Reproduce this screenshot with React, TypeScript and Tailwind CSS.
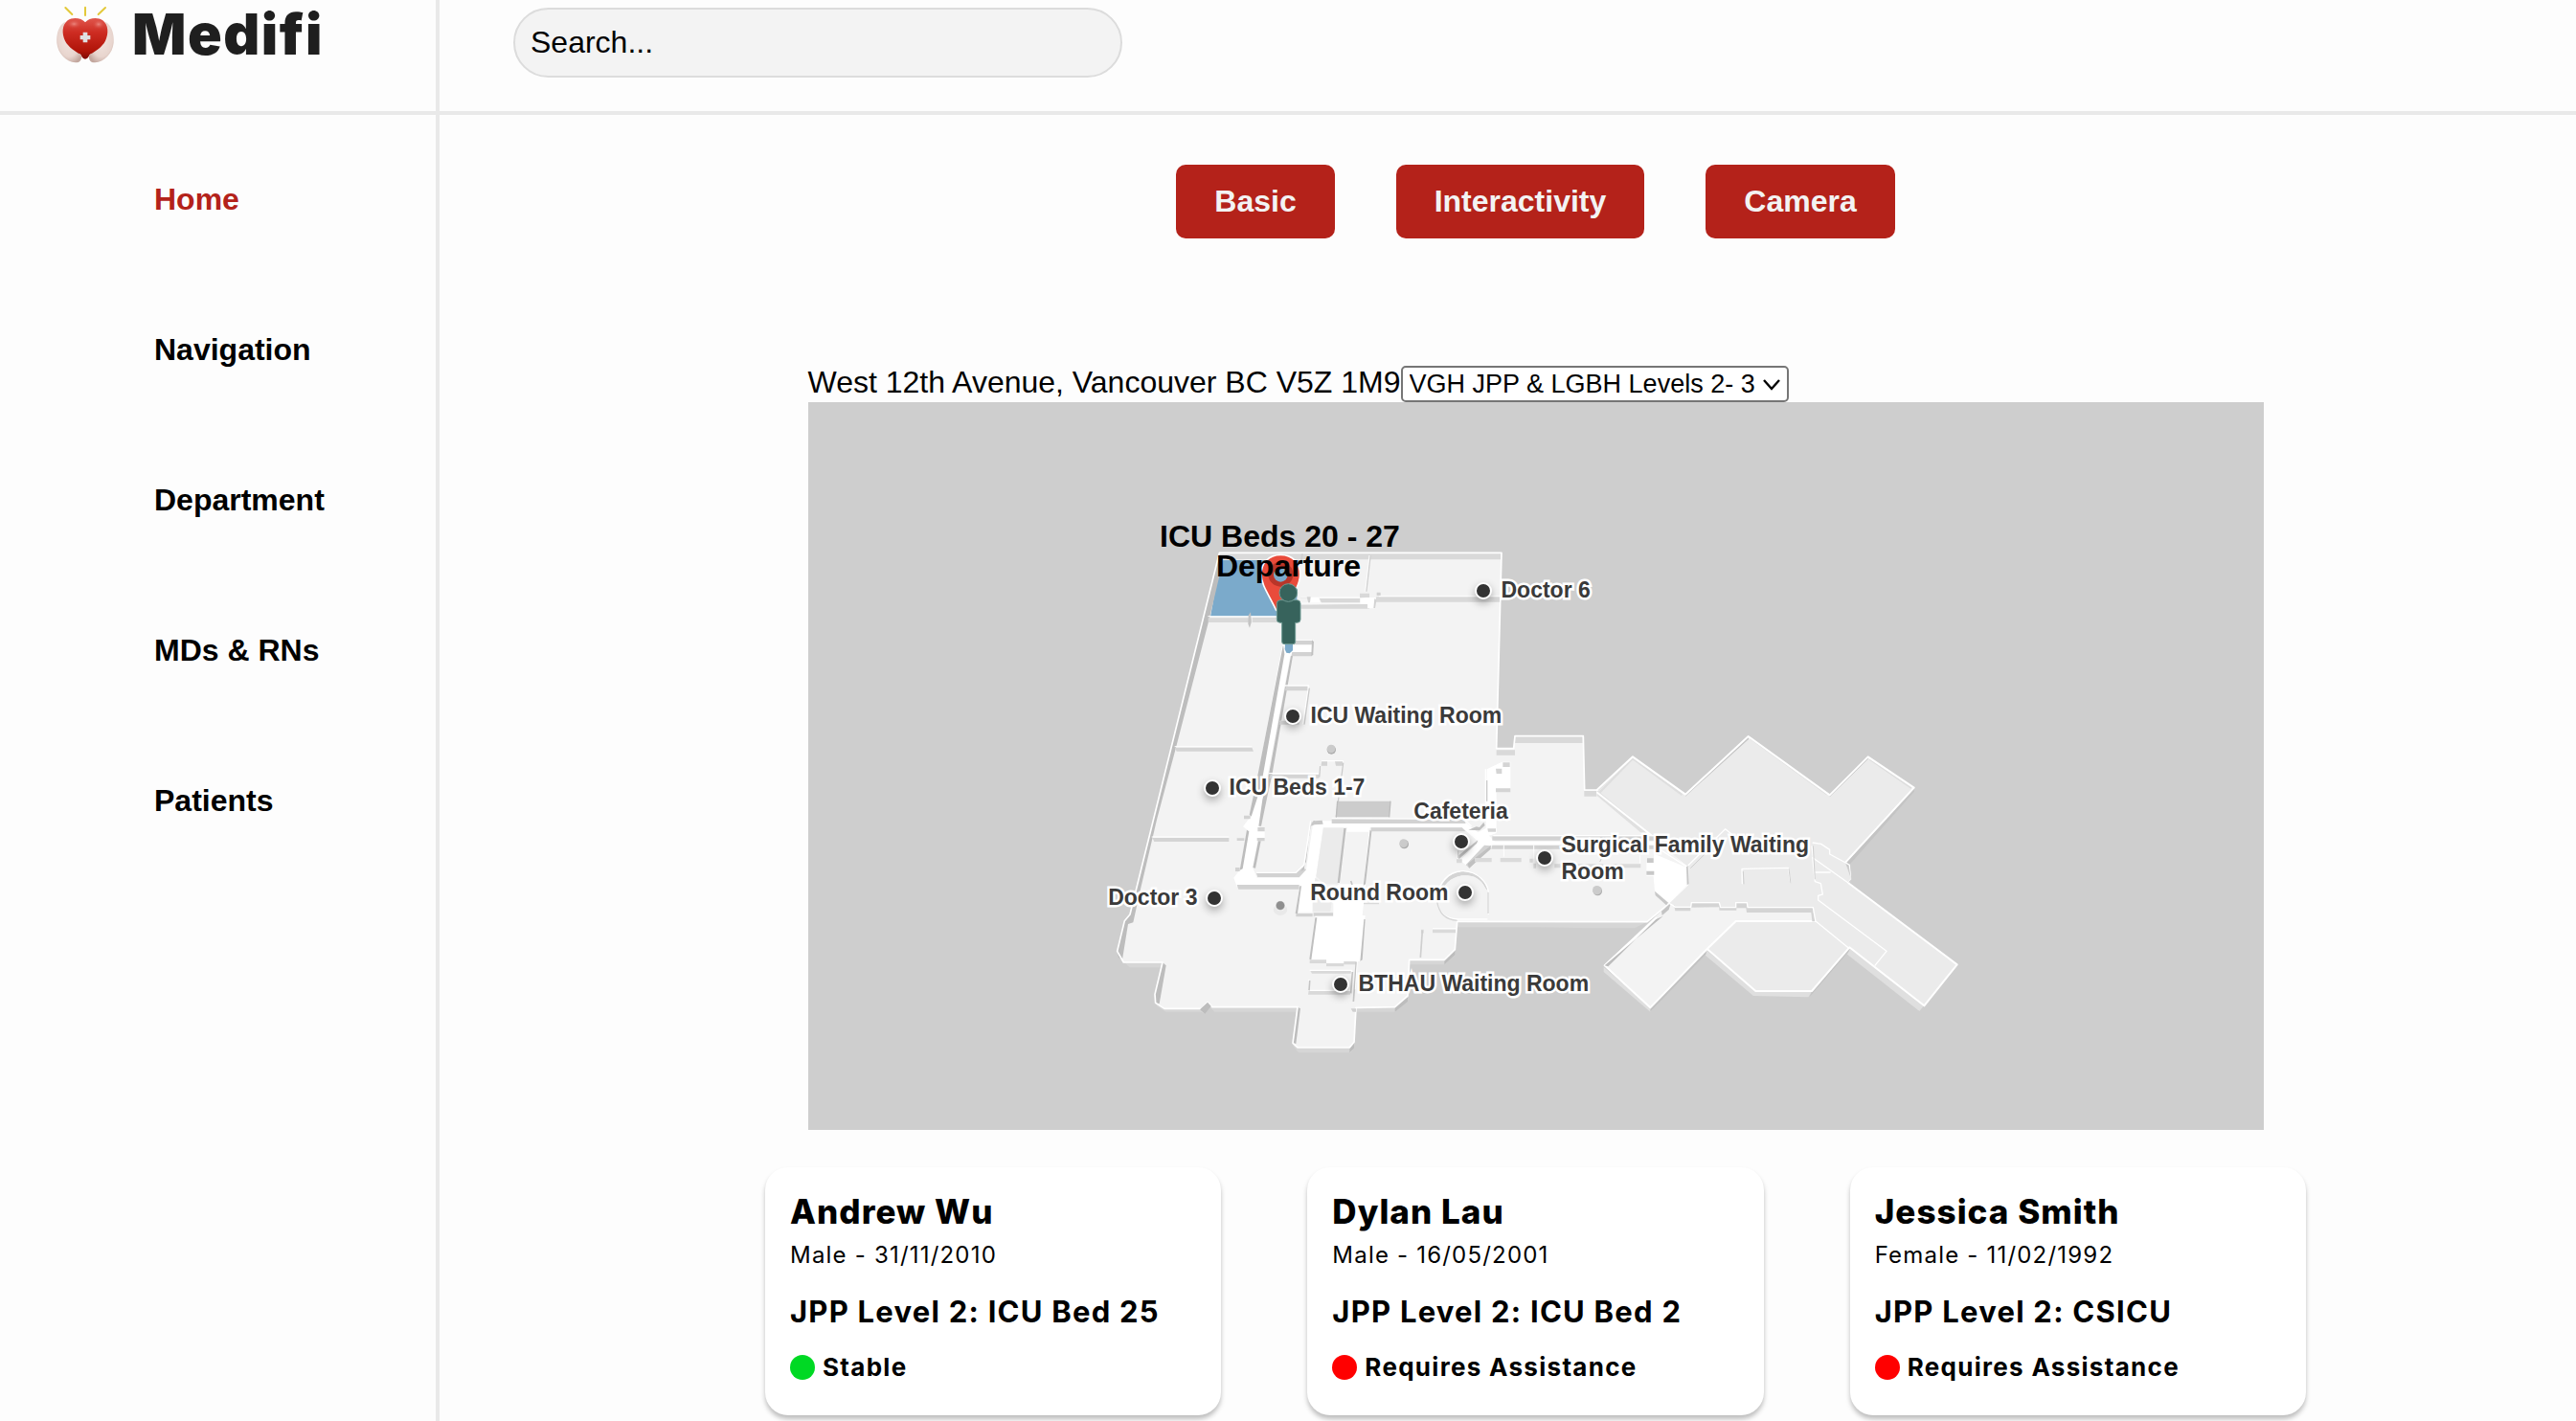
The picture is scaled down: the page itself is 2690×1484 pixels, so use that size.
const NAV_ITEMS = ["Home", "Navigation", "Department", "MDs & RNs", "Patients"];

const DEMOS = ["Basic", "Interactivity", "Camera"];

const PATIENTS = [
  { name: "Andrew Wu", info: "Male - 31/11/2010", place: "JPP Level 2: ICU Bed 25", stable: true },
  { name: "Dylan Lau", info: "Male - 16/05/2001", place: "JPP Level 2: ICU Bed 2", stable: false },
  { name: "Jessica Smith", info: "Female - 11/02/1992", place: "JPP Level 2: CSICU", stable: false },
];

type Place = { label: string; x: number; y: number; dotX: number; dotY: number; side: "left" | "right" | "center" };

// Positions are in map units; the map is 1520 by 760 units.
const PLACES: Place[] = [
  { label: "Doctor 6", x: 724, y: 196, dotX: 705, dotY: 197, side: "right" },
  { label: "ICU Waiting Room", x: 525, y: 327, dotX: 506, dotY: 328, side: "right" },
  { label: "ICU Beds 1-7", x: 440, y: 402, dotX: 422, dotY: 403, side: "right" },
  { label: "Cafeteria", x: 682, y: 427, dotX: 682, dotY: 459, side: "center" },
  { label: "Surgical Family Waiting\nRoom", x: 787, y: 476, dotX: 769, dotY: 476, side: "right" },
  { label: "Doctor 3", x: 407, y: 517, dotX: 424, dotY: 518, side: "left" },
  { label: "Round Room", x: 669, y: 512, dotX: 686, dotY: 512, side: "left" },
  { label: "BTHAU Waiting Room", x: 575, y: 607, dotX: 556, dotY: 608, side: "right" },
];

const TITLES = [
  { label: "ICU Beds 20 - 27", x: 493, y: 140 },
  { label: "Departure", x: 502, y: 171 },
];

const SIDE_CLASS = {
  right: "-translate-y-1/2 text-left",
  left: "-translate-x-full -translate-y-1/2 text-right",
  center: "-translate-x-1/2 -translate-y-1/2 text-center",
};

function place(x: number, y: number) {
  return { left: `${(x / 1520) * 100}%`, top: `${(y / 760) * 100}%` };
}

function Logo() {
  return (
    <svg viewBox="174 15 186 186" className="size-[62px]" aria-hidden="true">
      <defs>
        <linearGradient id="heart" x1="0" y1="0" x2="0" y2="1">
          <stop offset="0" stopColor="#e0564c" />
          <stop offset="0.35" stopColor="#cd2c22" />
          <stop offset="0.8" stopColor="#b01409" />
          <stop offset="1" stopColor="#7e0a04" />
        </linearGradient>
        <radialGradient id="shine">
          <stop offset="0" stopColor="#ee9189" stopOpacity="0.85" />
          <stop offset="1" stopColor="#d8443a" stopOpacity="0" />
        </radialGradient>
        <radialGradient id="hand" cx="0.5" cy="0.4" r="0.65">
          <stop offset="0" stopColor="#f3e6e1" />
          <stop offset="0.7" stopColor="#e8d5ce" />
          <stop offset="1" stopColor="#c3a79e" />
        </radialGradient>
      </defs>
      <g stroke="#e3c93a" strokeWidth="6" strokeLinecap="round">
        <path d="M205 24L226 45" />
        <path d="M267 23V48" />
        <path d="M330 24L308 45" />
      </g>
      <path d="M203 68C184 80 176 106 178 134C181 168 208 194 236 196C250 197 256 188 255 176C240 150 205 130 203 68Z" fill="url(#hand)" />
      <path d="M331 68C350 80 358 106 356 134C353 168 326 194 298 196C284 197 278 188 279 176C294 150 329 130 331 68Z" fill="url(#hand)" />
      <path d="M267 70C255 56 228 53 212 64C194 78 193 106 204 128C214 148 238 162 250 169C257 173 255 184 267 185C279 184 277 173 284 169C296 162 320 148 330 128C341 106 340 78 322 64C306 53 279 56 267 70Z" fill="url(#heart)" />
      <ellipse cx="232" cy="75" rx="24" ry="15" fill="url(#shine)" />
      <ellipse cx="309" cy="76" rx="20" ry="16" fill="url(#shine)" />
      <path d="M260 101h14v10h9v13h-9v9h-14v-9h-9v-13h9z" fill="#dfdfe2" />
    </svg>
  );
}

const OUTLINE =
  "M400-668H1284L1268-55H1322L1326-94H1540L1544 75H1582L1760 222L1868 315L1870 372L1810 430L1740 488L1145 487L1138 575L1105 607H995L990 720L950 755L828 757L822 865L808 882H645L630 868L645 755H378L363 740L345 760H228L200 742L198 715L222 615H100L80 580L103 485L120 465Z";

function FloorPlan() {
  return (
    <svg viewBox="0 0 4560 2280" className="block size-full" aria-label="Floor plan" role="img">
      <g transform="translate(888 1140)" strokeLinejoin="round">
        {/* outer wall faces */}
        <path
          d="M1145 487V505H1400L1560 508H1700L1740 488ZM1138 575V593L1105 622H995V607H1105ZM990 720V738L950 770H828V757H950ZM822 865V884L812 898H648L632 878L630 868L645 883H808ZM645 755V770H385L370 755L353 775L342 770H232L205 752L200 742L228 760H345L363 740L378 755ZM222 615V631H120L90 606L85 590L100 612Z"
          fill="#d6d6d6"
        />
        <path d="M1138 575V592L1105 622V607ZM990 720V738L950 770V755ZM822 865V884L808 898V882Z" fill="#bdbdbd" />
        <path d={OUTLINE} fill="#f3f3f3" />
        {/* blue selected room */}
        <path d="M404-645H650L640-468H372Z" fill="#7baacb" />
        {/* inner faces along the outer wall */}
        <path d="M400-668H1282V-647H416Z" fill="#d9d9d9" />
        <path d="M400-668L120 465L103 485L80 580L84 600L96 606L114 495L130 490L152 390L204 168L262-50L368-460L412-645Z" fill="#bdbdbd" />
        <path d="M222 615L233 625L212 745L200 742L198 715Z" fill="#bdbdbd" />
        <path d="M645 755L654 760L640 870L630 868Z" fill="#bdbdbd" />
        <path d="M1326-94H1538V-72H1326ZM1268-50H1326V-34H1268ZM1543 78H1582V95H1543Z" fill="#d9d9d9" />
        <path d={OUTLINE} fill="none" stroke="#fff" strokeWidth="5" />
        <path d="M363 740L374 752L355 776L339 763Z" fill="#bdbdbd" />

        {/* east wing, raised floor */}
        <path d="M1604 630V645L1750 770L1927 585V575L1750 755ZM1928 578L1921 592L2073 720L2245 724L2257 705H2080ZM2376 572L2367 590L2593 768L2608 750Z" fill="#dfdfdf" />
        <path d="M1750 755L1750 770L1924 590L1928 574ZM2257 705L2250 722L2372 580L2374 570Z" fill="#c2c2c2" />
        <path d="M1810 430L1604 625L1750 757L1928 573L2018 486L2268 486L2258 440Z" fill="#f3f3f3" />
        <path d="M1582 82L1695-29L1860 91L2057-93L2312 93L2432-29L2576 68L2362 305L2378 350L2372 366L2710 622L2608 750L2374 570L2257 705H2080L1928 573L2018 486L2268 486L2260 445L1830 440L1810 430L1870 372L1868 315L1740 215Z" fill="#ebebeb" />
        <path d="M1584 76L1584 94L1748 232L1762 232L1762 222Z" fill="#e0e0e0" />
        <path d="M2576 70L2364 303L2368 316L2577 80Z" fill="#c4c4c4" />
        <path d="M1860 95V88L2057-93L2058-84ZM2312 97V88L2432-30V-22Z" fill="#c4c4c4" />
        <path d="M1590 84L1695-24L1850 90M2066-86L2304 88M2438-22L2568 68" fill="none" stroke="#dedede" strokeWidth="7" />
        <path d="M1582 76L1695-29L1860 89L2057-93L2312 91L2432-29L2576 68L2362 301M2370 366L2711 622L2608 751L2374 568L2256 705H2080L1928 573L2018 486H2268M1928 573L1750 757L1607 625L1770 475M1582 82L1760 222" fill="none" stroke="#fff" strokeWidth="6" />
        <path d="M1790 470L1607 625L1618 628L1768 480Z" fill="#bdbdbd" />
        <path d="M1785 455L1815 428L1808 450L1787 468Z" fill="#c4c4c4" />
        {/* walls of the raised wing */}
        <path d="M1824 434L1830 442H1877L1878 430H1965L1970 443H2018V430H2053L2055 443H2258L2267 487H2257L2254 459H2052L2050 445H2020V452H1966V442L1876 443V454H1828Z" fill="#d4d4d4" />
        <path d="M1810 430L1829 442H1877L1879 428H1966L1970 443H2018V428H2053L2055 443H2260L2268 488M1868 312L1985 197L2005 214M1740 235L1868 318V372M2038 370L2037 322L2182 319L2190 368M2258 240L2285 244L2312 262L2312 276L2362 303L2374 310L2380 352L2370 366L2260 288L2256 250M2258 285L2266 362L2284 368L2290 402L2276 406V420L2490 580L2453 626M2266 333H2315M2268 486L2374 572" fill="none" stroke="#fff" strokeWidth="4" />
        <path d="M2043 370L2041 330M2184 322L2190 368M2260 250L2266 355M2378 312L2381 354L2372 364M1876 320L1945 252" fill="none" stroke="#cfcfcf" strokeWidth="3" />
        <path d="M1762 275L1865 318L1868 370L1810 430L1764 392L1760 345H1738V303H1760Z" fill="#fff" />
        <path d="M1863 316L1868 313L1871 370L1865 372ZM1740 289H1760V303H1740ZM1738 329H1762V341H1738ZM1764 392L1806 428L1800 436L1766 405Z" fill="#c8c8c8" />

        {/* upper rooms */}
        <path d="M365-464H500V-450H365ZM503-465H585V-450H503ZM655-505L870-508V-493H655ZM655-525H840V-511H720L712-529H655ZM892-530H1278V-514H888ZM840-541H870V-528H840Z" fill="#d9d9d9" />
        <path d="M364-469H580M655-528H840M655-510H862M900-532H1282" stroke="#fff" strokeWidth="3" />
        <path d="M873-660L860-547M660-665L656-640" stroke="#cfcfcf" strokeWidth="5" />
        <path d="M870-660L857-547" stroke="#fff" strokeWidth="3" />
        <path d="M842-525L860-528L890-528L886-494H864V-508H842ZM676-528H712L716-512H676Z" fill="#fff" />
        <path d="M886-525L892-520L888-495H883ZM674-530H686L684-512H678ZM893-544H905V-534H893Z" fill="#d2d2d2" />
        <path d="M491-472L498-482L500-450L495-433L490-445Z" fill="#c4c4c4" />
        <path d="M260-58H502L507-46H266Z" fill="#d4d4d4" />
        <path d="M260-61H502" stroke="#fff" strokeWidth="3" />
        <path d="M190 225H430V237H196ZM455 226H478V234H455Z" fill="#d4d4d4" />
        <path d="M188 222H430" stroke="#fff" strokeWidth="3" />

        {/* main corridor */}
        <path d="M597-380L624-395H695V-350L622-345L551 30L525 190L542 195V235L520 232L505 320L518 350H650L672 325L692 190L705 172H1167L1187 190L1210 208L1235 195L1238 10L1285-13H1312V80H1268V210L1245 218L1262 236H1770V248H1250L1240 262L1182 318L1160 300V290L1212 238L1160 192H725L703 345L692 458H640L650 378H455L445 350L465 325L488 200L474 190L497 160Z" fill="#fff" />
        <path d="M593-345L600-380L604-350L530 65L500 158L494 152L518 40ZM624-345L556 20L535 105L523 188L531 188L547 110L565 28L630-345ZM486 200L493 205L473 322L464 326ZM522 235H530L513 320L505 318Z" fill="#bdbdbd" />
        <path d="M516 336H640L660 317L672 325L650 348H520ZM625-393H690V-380H628ZM628-357H690V-344H625ZM455 372H650V386H460ZM752 166H1165L1172 180H752ZM875 193H1160L1172 205H875ZM1255 220H1770V233H1255ZM1255 248H1770V260H1252ZM1230 248L1252 250L1184 320L1172 310ZM640 462H692V472H640ZM695 460H757V470H695ZM520 192H542V205H520ZM518 225H542V235H518ZM477 155H497V166H477ZM450 318H464V330H450Z" fill="#d2d2d2" />
        <path d="M690-395L696-390L694-348L688-345ZM1210 232L1206 242L1150 292V280ZM1180 200L1205 190L1215 192L1228 176L1232 186L1215 202ZM1250 250V260L1182 320L1178 306ZM690 170L685 195L665 325L655 330L672 300L684 190ZM652 376H657L645 462H638Z" fill="#c0c0c0" />
        <path d="M752 164L1165 166L1190 188M1258 218H1770M517 334H640L665 310L686 172M605-252H680L662-132M590-140H650M555 23H712L722-16H787L768 160M1234 120V10" fill="none" stroke="#fff" strokeWidth="4" />
        <path d="M608-250H676V-236H606ZM590-142H650V-130H588ZM560 27H712V38H556ZM720-14H738V-1H718ZM762-14H786V-1H765ZM1288-11H1310V3H1288ZM1266 8H1285V24H1268ZM1266 70H1312V82H1266ZM1240 196H1266V206H1242Z" fill="#d4d4d4" />
        <path d="M682-244L666-130M716 0L713 35M788-10L766 160M1238 45V110" stroke="#cacaca" strokeWidth="4" />
        <path d="M700 172C692 168 690 180 686 188L698 184L725 182L722 170Z" fill="#c8c8c8" />
        <path d="M770 110H936L932 160H766Z" fill="#cccccc" />
        <path d="M936 110L932 160M770 110L766 160" stroke="#bdbdbd" strokeWidth="4" />

        {/* central block */}
        <path d="M726 194H790L771 370H730L703 345Z" fill="#ebebeb" />
        <path d="M692 425L700 350L757 390L750 440L748 456H692Z" fill="#ebebeb" />
        <path d="M800 192H872L858 375L848 468H857L845 612H790V628H735V612H683L700 470H757V430L745 420L768 375L778 368Z" fill="#fff" />
        <path d="M798 206H868L852 370H778Z" fill="#f3f3f3" />
        <path d="M790 195H797L777 366H770ZM872 200L877 205L858 370L851 375ZM700 475L706 475L688 607L682 605ZM853 480L857 480L848 607L841 612Z" fill="#bfbfbf" />
        <path d="M852 428H900V433H852ZM683 607H735V618H683ZM790 612H830V622H790ZM735 618H790V628H735ZM684 640H812V650H690ZM680 703H810V716H678Z" fill="#d9d9d9" />
        <path d="M683 640H815V703H680V670" fill="none" stroke="#fff" strokeWidth="4" />
        <path d="M829 615L820 738M817 645L812 712M683 672L681 703M812 360L816 372" stroke="#c4c4c4" strokeWidth="5" />
        <path d="M832 612L826 700" stroke="#fff" strokeWidth="3" />
        <path d="M812 760H828V770H818Z" fill="#d0d0d0" />

        {/* round room and rooms beside it */}
        <path d="M1083 430C1085 370 1120 330 1165 330C1208 332 1235 360 1242 392L1232 380C1218 350 1190 340 1163 343C1128 346 1100 372 1095 400Z" fill="#d4d4d4" />
        <path d="M1095 400C1100 372 1128 346 1163 343C1190 340 1218 350 1232 380L1240 400V478H1150C1115 478 1092 460 1086 430Z" fill="#f3f3f3" />
        <path d="M1083 410C1085 365 1120 328 1165 329C1210 331 1240 365 1243 395V465M1084 435C1092 465 1115 480 1150 480H1240" fill="none" stroke="#fff" strokeWidth="4" />
        <path d="M1082 425C1088 462 1110 482 1145 484M1242 395V462" fill="none" stroke="#d6d6d6" strokeWidth="4" />
        <path d="M1068 512H1140V523H1068ZM1032 512H1040V524H1032ZM1143 292H1160V304H1143ZM1200 288H1253V301H1200ZM1280 288H1346V301H1280ZM1372 290H1382V302H1372ZM1384 305H1392V320H1384ZM1450 307H1720V319H1450Z" fill="#dadada" />
        <path d="M1036 515L1030 600" stroke="#cfcfcf" strokeWidth="5" />
        <path d="M1068 509H1142M1291 248V284M1385 248V290M1718 280V305M1146 262V290" fill="none" stroke="#fff" strokeWidth="3" />
        <path d="M1148 265V288M1597 290L1592 300" stroke="#cfcfcf" strokeWidth="3" />

        {/* pillars */}
        <g fill="#adadad">
          <circle cx="751" cy="-51" r="14" />
          <circle cx="979" cy="245" r="14" />
          <circle cx="1585" cy="392" r="14" />
        </g>
        <g fill="#cbcbcb">
          <circle cx="750" cy="-54" r="13" />
          <circle cx="977" cy="242" r="13" />
          <circle cx="1583" cy="389" r="14" />
        </g>
        <ellipse cx="591" cy="450" rx="22" ry="18" fill="#000" opacity="0.04" />
        <circle cx="591" cy="437" r="15" fill="#8f8f8f" stroke="#fff" strokeOpacity="0.6" strokeWidth="4" />

        {/* route, destination pin and person */}
        <path d="M606-382H630V-362L620-353L610-355L605-366Z" fill="#7baacb" />
        <path d="M592-662C554-662 531-635 531-600C531-568 556-535 578-488H604C628-530 653-568 653-600C653-635 630-662 592-662Z" fill="#e94b3b" stroke="#fff" strokeWidth="5" />
        <circle cx="592" cy="-601" r="39" fill="#b93529" />
        <circle cx="592" cy="-599" r="22" fill="#7baacb" />
        <g fill="#37635c" stroke="#6f9a93" strokeWidth="3">
          <path d="M591-520H643Q654-520 654-509V-459Q654-449 643-449H638V-390Q638-382 630-382H604Q596-382 596-390V-449H591Q580-449 580-459V-509Q580-520 591-520Z" />
          <circle cx="616" cy="-543" r="28" />
        </g>
      </g>
    </svg>
  );
}

function VenueMap() {
  return (
    <div className="relative aspect-[2/1] w-full overflow-hidden bg-[#cecece] font-bold">
      <FloorPlan />
      {PLACES.map((p) => (
        <div key={p.label}>
          <span
            className="absolute size-[18px] -translate-x-1/2 -translate-y-1/2 rounded-full border-2 border-white bg-[#333] shadow-[0_4px_8px_rgba(0,0,0,0.3)]"
            style={place(p.dotX, p.dotY)}
          />
          <span
            className={`absolute whitespace-pre text-[23px] leading-7 text-[#3a3a3a] [-webkit-text-stroke:5px_#fff] [paint-order:stroke_fill] ${SIDE_CLASS[p.side]}`}
            style={place(p.x, p.y)}
          >
            {p.label}
          </span>
        </div>
      ))}
      {TITLES.map((t) => (
        <span
          key={t.label}
          className="absolute -translate-x-1/2 -translate-y-1/2 whitespace-nowrap text-[32px] leading-9 text-black"
          style={place(t.x, t.y)}
        >
          {t.label}
        </span>
      ))}
    </div>
  );
}

function PatientCard({ patient }: { patient: (typeof PATIENTS)[number] }) {
  return (
    <article className="h-[259px] rounded-[24px] bg-white px-[26px] pt-[22px] font-['Inter',sans-serif] shadow-[0_4px_5px_rgba(0,0,0,0.25)]">
      <h2 className="text-[35px] leading-[48px] font-extrabold tracking-[0.03em]">{patient.name}</h2>
      <p className="text-2xl leading-[44px] tracking-wider">{patient.info}</p>
      <p className="mt-3 text-[31px] leading-[50px] font-bold tracking-[0.04em]">{patient.place}</p>
      <p className="mt-2 flex items-center gap-2 text-[26px] leading-[50px] font-bold tracking-wider">
        <span className={`size-[26px] rounded-full ${patient.stable ? "bg-[#00d924]" : "bg-[#ff0000]"}`} />
        {patient.stable ? "Stable" : "Requires Assistance"}
      </p>
    </article>
  );
}

export default function App() {
  return (
    <div className="flex min-h-screen bg-[#fdfdfd] font-['Liberation_Sans',Arial,sans-serif] text-[32px] text-black">
      <aside className="w-[459px] shrink-0 border-r-4 border-[#e9e9e9]">
        <a href="#home" className="flex h-[120px] items-start gap-[18px] border-b-4 border-[#e9e9e9] pt-[5px] pl-[58px]">
          <Logo />
          <span className="font-['Inter',sans-serif] text-[59px] leading-[62px] font-black tracking-wide text-[#1f1f1f]">Medifi</span>
        </a>
        <nav className="flex flex-col gap-[120px] pt-[70px] pl-[161px]">
          {NAV_ITEMS.map((item, i) => (
            <a key={item} href="#home" className={`leading-[37px] font-bold ${i === 0 ? "text-[#b4221a]" : "text-black"}`}>
              {item}
            </a>
          ))}
        </nav>
      </aside>

      <div className="min-w-0 flex-1">
        <header className="h-[120px] border-b-4 border-[#e9e9e9] pt-2 pl-[77px]">
          <input
            type="search"
            aria-label="Search"
            placeholder="Search..."
            className="block h-[73px] w-[636px] rounded-full border-2 border-[#dcdcdc] bg-[#f3f3f3] px-4 placeholder:text-black placeholder:opacity-100"
          />
        </header>

        <main className="flex flex-col items-center pt-[52px] pl-[58px]">
          <div className="flex gap-16">
            {DEMOS.map((demo) => (
              <button key={demo} type="button" className="rounded-[10px] bg-[#b4221a] px-10 py-5 leading-[37px] font-bold text-[#f3f3f3]">
                {demo}
              </button>
            ))}
          </div>

          <section className="mt-[133px] w-full max-w-[1520px]">
            <div className="flex items-start">
              <label htmlFor="venue" className="leading-[34px]">
                West 12th Avenue, Vancouver BC V5Z 1M9
              </label>
              <div className="relative">
                <select id="venue" className="block h-[38px] appearance-none rounded-[5px] border-2 border-[#767676] bg-white pr-8 pl-[7px] text-[27px] leading-[34px]">
                  <option>VGH JPP &amp; LGBH Levels 2- 3</option>
                </select>
                <svg viewBox="0 0 18 12" className="pointer-events-none absolute top-[14px] right-[9px] h-3 w-[18px]" aria-hidden="true">
                  <path d="M1 1L9 10L17 1" fill="none" stroke="#000" strokeWidth="2.4" />
                </svg>
              </div>
            </div>
            <VenueMap />
          </section>

          <section className="mt-[39px] grid w-full max-w-[1609px] grid-cols-3 gap-[90px]">
            {PATIENTS.map((patient) => (
              <PatientCard key={patient.name} patient={patient} />
            ))}
          </section>
        </main>
      </div>
    </div>
  );
}
